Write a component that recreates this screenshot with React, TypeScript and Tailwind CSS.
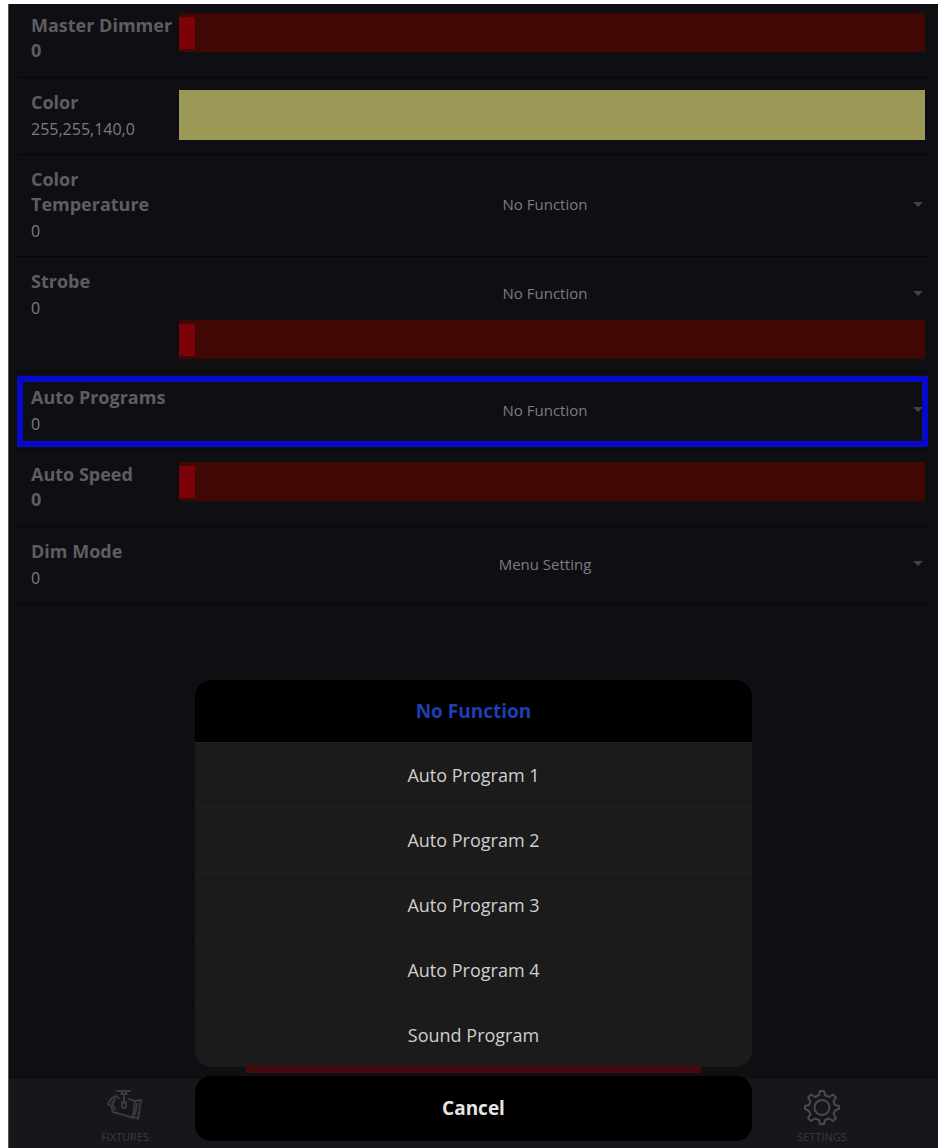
import { useState } from "react";
import type { ReactNode } from "react";

const programs = [
  "No Function",
  "Auto Program 1",
  "Auto Program 2",
  "Auto Program 3",
  "Auto Program 4",
  "Sound Program",
];

function Slider({ id, label }: { id: string; label?: string }) {
  const [value, setValue] = useState(0);
  return (
    <input
      id={id}
      aria-label={label}
      type="range"
      min={0}
      max={255}
      value={value}
      onChange={(e) => setValue(Number(e.target.value))}
      className="block h-[39px] w-full appearance-none bg-[#3f0804] [&::-webkit-slider-thumb]:h-8 [&::-webkit-slider-thumb]:w-4 [&::-webkit-slider-thumb]:appearance-none [&::-webkit-slider-thumb]:bg-[#7c0209]"
    />
  );
}

function Picker({ id, options }: { id: string; options: string[] }) {
  return (
    <div className="relative flex items-center">
      <select
        id={id}
        className="w-full appearance-none bg-transparent pr-[14px] text-center text-[15px] leading-6 text-[#7c7c80] [text-align-last:center]"
      >
        {options.map((option) => (
          <option key={option}>{option}</option>
        ))}
      </select>
      <svg
        viewBox="0 0 10 5"
        className="pointer-events-none absolute right-0.5 h-[5px] w-[10px] fill-[#434347]"
      >
        <path d="M0 0h10L5 5z" />
      </svg>
    </div>
  );
}

type RowProps = {
  id: string;
  label: string;
  value: string;
  boldValue?: boolean;
  highlighted?: boolean;
  className?: string;
  children: ReactNode;
};

function Row({ id, label, value, boldValue, highlighted, className, children }: RowProps) {
  return (
    <div
      className={`relative flex border-b border-[#060608] pr-[3px] pb-[11px] pl-[14px] text-[#5e5e61] ${className ?? "min-h-[77px] pt-3"}`}
    >
      <div className="w-[148px] shrink-0">
        <label htmlFor={id} className="block text-lg leading-[25px] font-bold">
          {label}
        </label>
        <span
          className={
            boldValue
              ? "block text-lg leading-[25px] font-bold"
              : "block text-base leading-[28px] text-[#7c7c80]"
          }
        >
          {value}
        </span>
      </div>
      <div className="min-w-0 flex-1">{children}</div>
      {highlighted && (
        <div className="pointer-events-none absolute inset-x-0 top-[3px] bottom-[2px] border-[6px] border-[#0808c8]" />
      )}
    </div>
  );
}

function FixtureIcon() {
  return (
    <svg
      viewBox="0 0 36 32"
      className="h-8 w-9 fill-none stroke-[#3a3a3e]"
      strokeWidth="2"
      strokeLinejoin="round"
      strokeLinecap="round"
    >
      <path d="M10 2h13M14 5h6M15 2v3M19 2v3M17 5v9" />
      <path d="M15 13v4a2 2 0 0 0 4 0v-4" />
      <path d="M12 9 9 7 5 9 1 15l3 2 2 6 21 6" />
      <path d="M8 10 5 15l3 5M22 10l6 2" />
      <path d="M28 12l6-1-3 19-5-3z" />
      <path d="M30 15l-2 10" />
    </svg>
  );
}

function GearIcon() {
  return (
    <svg
      viewBox="0 0 36 36"
      className="size-9 fill-none stroke-[#4a4a4d]"
      strokeWidth="2"
      strokeLinejoin="round"
    >
      <path d="M16 2h4l1 4 4 2 4-2.5 3 3-2.500 4 1.500 3.500 4 1v3l-4 1.500-1.500 3.500 2.500 4-3 3-4-2.500-4 1.500-1 4h-4l-1-4-4-1.500-4 2.500-3-3 2.500-4L4.500 21.500 1 20v-3l4-1 1.500-3.500L4 8.500l3-3L11 8l4-2z" />
      <circle cx="18" cy="18.5" r="7.5" />
    </svg>
  );
}

export default function App() {
  return (
    <div className="flex min-h-screen flex-col bg-white px-2 pt-1 font-['Open_Sans',sans-serif]">
      <div className="relative -mr-[3px] flex flex-1 flex-col overflow-hidden border-l border-[#55555a] bg-[#0f0f13]">
        <main className="pr-[10px] pl-2">
          <Row
            id="dimmer"
            label="Master Dimmer"
            value="0"
            boldValue
            className="min-h-[74px] pt-[9px]"
          >
            <Slider id="dimmer" />
          </Row>
          <Row id="color" label="Color" value="255,255,140,0">
            <button id="color" aria-label="Color" className="block h-[50px] w-full bg-[#9b9955]" />
          </Row>
          <Row id="temperature" label="Color Temperature" value="0">
            <div className="flex h-full flex-col justify-center pb-1">
              <Picker id="temperature" options={["No Function"]} />
            </div>
          </Row>
          <Row id="strobe" label="Strobe" value="0">
            <div className="flex flex-col gap-[15px] pt-3 pb-0.5">
              <Picker id="strobe" options={["No Function"]} />
              <Slider id="strobe-speed" label="Strobe speed" />
            </div>
          </Row>
          <Row id="programs" label="Auto Programs" value="0" highlighted>
            <div className="flex h-full flex-col justify-center pb-1">
              <Picker id="programs" options={programs} />
            </div>
          </Row>
          <Row id="speed" label="Auto Speed" value="0" boldValue>
            <Slider id="speed" />
          </Row>
          <Row id="mode" label="Dim Mode" value="0">
            <div className="flex h-full flex-col justify-center pb-1">
              <Picker id="mode" options={["Menu Setting"]} />
            </div>
          </Row>
        </main>

        {/* Page slider, partly hidden by the sheet */}
        <div className="relative z-20 mx-auto mt-auto mb-[6px] h-2 w-[49%] bg-[#430b0d]" />

        <nav className="flex h-[69px] justify-between bg-[#17171b] px-[60px] pt-[10px] text-[11px] leading-4 text-[#3a3a3d]">
          <a href="#fixtures" className="flex w-28 flex-col items-center gap-2">
            <FixtureIcon />
            FIXTURES
          </a>
          <a href="#settings" className="flex w-28 flex-col items-center gap-1">
            <GearIcon />
            SETTINGS
          </a>
        </nav>

        {/* Action sheet */}
        <div className="absolute bottom-[7px] left-1/5 flex w-3/5 flex-col gap-[9px] text-[#cfcfcf]">
          <div className="overflow-hidden rounded-2xl bg-[#1b1b1b]">
            {programs.map((program, index) => (
              <button
                key={program}
                className={
                  index === 0
                    ? "block h-[62px] w-full bg-black text-[19px] font-bold text-[#1c3fb4]"
                    : "block h-[65px] w-full border-t border-[#202020] text-lg"
                }
              >
                {program}
              </button>
            ))}
          </div>
          <button className="h-[65px] rounded-2xl bg-black text-[19px] font-bold text-[#e4e4e4]">
            Cancel
          </button>
        </div>
      </div>
    </div>
  );
}
